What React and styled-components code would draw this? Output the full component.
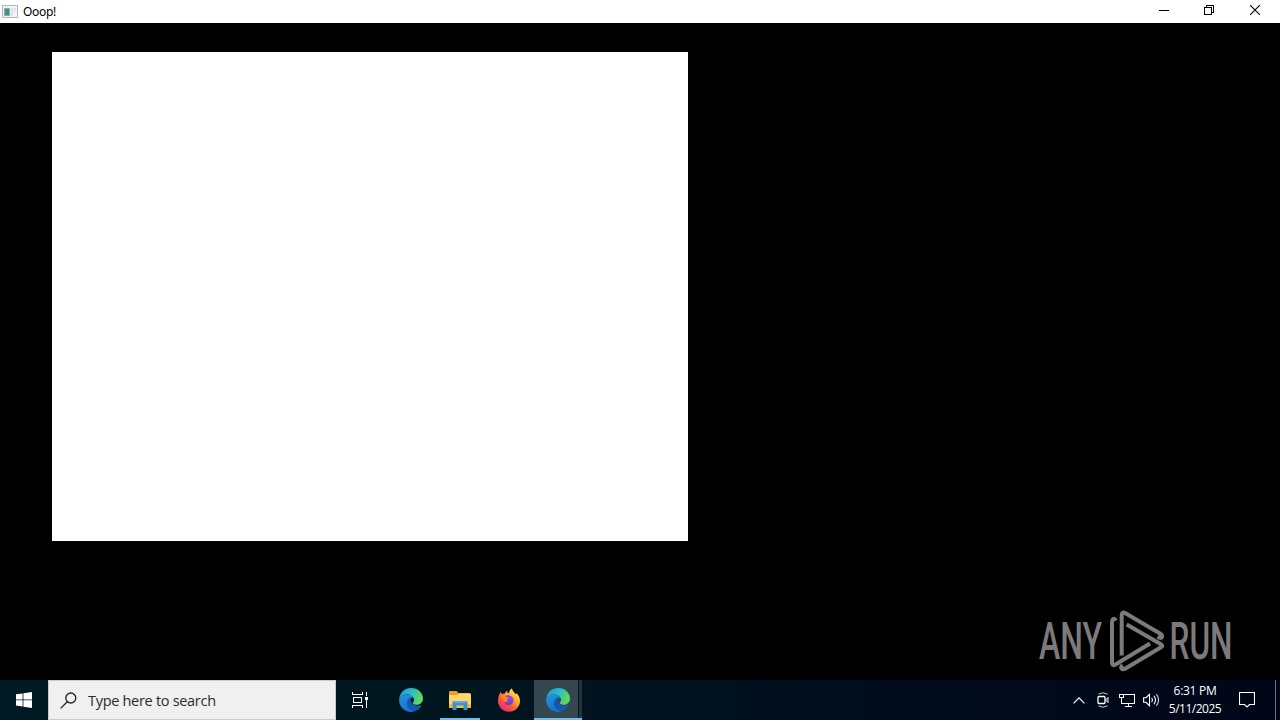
import React from 'react'
import styled, { createGlobalStyle } from 'styled-components';


function App() {
    return (
        <Screen>
            <GlobalStyle />
            <TitleBar>
                <AppIcon />
                <Title>Ooop!</Title>
                <CaptionButton $width={44}><MinimizeIcon /></CaptionButton>
                <CaptionButton><RestoreIcon /></CaptionButton>
                <CaptionButton><CloseIcon /></CaptionButton>
            </TitleBar>

            <Client>
                <Canvas />
                <Watermark />
            </Client>

            <Taskbar>
                <StartButton><WindowsIcon /></StartButton>
                <Search>
                    <SearchIcon />
                    <SearchText>Type here to search</SearchText>
                </Search>
                <TaskView><TaskViewIcon /></TaskView>
                <Apps>
                    <AppButton><EdgeIcon id="edge1" /></AppButton>
                    <AppButton $open><FolderIcon /></AppButton>
                    <AppButton><FirefoxIcon /></AppButton>
                    <ActiveGroup>
                        <ActiveButton><EdgeIcon id="edge2" /></ActiveButton>
                        <StackEdge />
                    </ActiveGroup>
                </Apps>
                <Tray>
                    <TrayIcon><ChevronIcon /></TrayIcon>
                    <TrayIcon><MeetIcon /></TrayIcon>
                    <TrayIcon><NetworkIcon /></TrayIcon>
                    <TrayIcon><VolumeIcon /></TrayIcon>
                </Tray>
                <Clock>
                    <Time>6:31 PM</Time>
                    <Day>5/11/2025</Day>
                </Clock>
                <Notifications><NoteIcon /></Notifications>
                <ShowDesktop />
            </Taskbar>
        </Screen>
    )
}

export default App


// title bar icons

function AppIcon() {
    return (
        <svg width="16" height="14" viewBox="0 0 16 14">
            <rect x="0.5" y="0.5" width="15" height="12" fill="#f4f2f5" stroke="#b9b4bc" />
            <rect x="2" y="3" width="6" height="8" fill="#7fb3a6" />
            <rect x="3" y="4" width="4" height="6" fill="#4c9080" />
            <rect x="9" y="3" width="2" height="8" fill="#d3e2ee" />
            <rect x="12" y="3" width="2" height="4" fill="#dfe3ee" />
        </svg>
    )
}

function MinimizeIcon() {
    return (
        <svg width="10" height="10" viewBox="0 0 10 10" shapeRendering="crispEdges">
            <rect x="0" y="5" width="10" height="1" fill="#000" />
        </svg>
    )
}

function RestoreIcon() {
    return (
        <svg width="10" height="10" viewBox="0 0 10 10" fill="none" stroke="#000" shapeRendering="crispEdges">
            <path d="M2.5 2.5V0.5H9.5V7.5H7.5" />
            <rect x="0.5" y="2.5" width="7" height="7" />
        </svg>
    )
}

function CloseIcon() {
    return (
        <svg width="10" height="10" viewBox="0 0 10 10" stroke="#000" strokeWidth="1.1">
            <path d="M0 0L10 10M10 0L0 10" />
        </svg>
    )
}

function Watermark() {
    return (
        <Mark width="200" height="66" viewBox="0 0 200 66">
            <text x="4" y="51" textLength="63" lengthAdjust="spacingAndGlyphs">ANY</text>
            <g fill="none" stroke="#7b7b7b" strokeWidth="4" strokeLinejoin="round">
                <path d="M81 12.500C79 9.500 77 11 77 14V54.500Q77 58.500 80.500 56.500L115 35.500" />
                <path d="M86.700 47.500V7.500Q86.700 3 90.500 5.200L125 25.500C129 28 127 31.500 122.500 28.700" />
                <path d="M91.700 16.500L126 36.300Q128.500 37.800 126 39.300L90.500 60.500C87 62.500 84.500 59.500 87.500 57" />
            </g>
            <text x="134.5" y="51" textLength="63" lengthAdjust="spacingAndGlyphs">RUN</text>
        </Mark>
    )
}

// taskbar icons

function WindowsIcon() {
    return (
        <svg width="16" height="16" viewBox="0 0 16 16" fill="#fff">
            <path d="M0 2.300L6.600 1.400V7.500H0ZM7.400 1.300L16 0V7.500H7.400ZM0 8.300H6.600V14.500L0 13.600ZM7.400 8.300H16V16L7.400 14.700Z" />
        </svg>
    )
}

function SearchIcon() {
    return (
        <svg width="17" height="17" viewBox="0 0 17 17" fill="none" stroke="#222" strokeWidth="1.3">
            <circle cx="10.800" cy="6" r="5" />
            <path d="M7.300 9.700L0.600 16.400" />
        </svg>
    )
}

function TaskViewIcon() {
    return (
        <svg width="16" height="16" viewBox="0 0 16 16" fill="none" stroke="#fff" shapeRendering="crispEdges">
            <path d="M0.500 0V2.500H10.500V0M0.500 16V13.500H10.500V16" />
            <rect x="1.500" y="5.500" width="8" height="5" />
            <path d="M14.500 0V4M14.500 8V16" />
            <rect x="13" y="5" width="3" height="3" fill="#fff" stroke="none" />
        </svg>
    )
}

function EdgeIcon({ id }) {
    return (
        <svg width="24" height="24" viewBox="0 0 24 24">
            <defs>
                <linearGradient id={id + 'top'} x1="0" y1="0.300" x2="1" y2="0.600">
                    <stop offset="0" stopColor="#2299d8" />
                    <stop offset="0.500" stopColor="#30bcc4" />
                    <stop offset="0.900" stopColor="#5fd75c" />
                </linearGradient>
                <linearGradient id={id + 'left'} x1="0" y1="0" x2="0.300" y2="1">
                    <stop offset="0" stopColor="#1f96dc" />
                    <stop offset="1" stopColor="#1473cc" />
                </linearGradient>
            </defs>
            <path d="M0.200 11C0.800 4.500 5.800 0 12 0C19 0 24 5 24 10.500C24 14.500 21 16.800 17.500 16.800C14.500 16.800 13.600 15.800 13.600 15.100C13.600 14.500 15 14 15 11.800C15 8.800 11.800 6.500 8.300 6.500C4.500 6.500 1.300 8.300 0.200 11Z" fill={`url(#${id}top)`} />
            <path d="M0.100 12C0.100 8.800 3.700 6.400 8 6.400C11.500 6.400 14 8 14.700 10.200C11.500 8.500 8.500 11.500 8.500 15C8.500 19.500 12 22.700 16 23.200C14.800 23.700 13.500 24 12 24C5.500 24 0 18.800 0.100 12Z" fill={`url(#${id}left)`} />
            <path d="M12 9.700C9.500 10.300 8 12.800 8 15.500C8 19.500 11.500 23.300 16 23.200C19 22.200 21 20.300 22.200 18.200C22.500 17.600 22 17.200 21.500 17.300C19 18.200 16 17.500 14 16C12.200 14.600 11.700 13.300 11.800 12C11.900 11 12.200 10.300 13 9.700Z" fill="#1559ae" />
        </svg>
    )
}

function FolderIcon() {
    return (
        <svg width="22" height="20" viewBox="0 0 22 20">
            <path d="M0 2Q0 1 1 1H7.500L9.500 3H21V8H0Z" fill="#e8a020" />
            <path d="M0 5H8L10 3.500H21Q22 3.500 22 4.500V18H0Z" fill="#ffd667" />
            <path d="M0 14H22V18H0Z" fill="#f5bd3d" />
            <path d="M3.500 20V12Q3.500 11 4.500 11H17.500Q18.500 11 18.500 12V20H14.500V15.500H7.500V20Z" fill="#3f92d2" />
            <path d="M4.500 11H17.500V13H4.500Z" fill="#5daee8" />
        </svg>
    )
}

function FirefoxIcon() {
    return (
        <svg width="24" height="24" viewBox="0 0 24 24">
            <defs>
                <linearGradient id="fox" x1="0.850" y1="0.050" x2="0.200" y2="0.950">
                    <stop offset="0" stopColor="#fff04a" />
                    <stop offset="0.350" stopColor="#ffb02e" />
                    <stop offset="0.650" stopColor="#ff5a36" />
                    <stop offset="1" stopColor="#e8247c" />
                </linearGradient>
                <linearGradient id="globe" x1="0.800" y1="0" x2="0.300" y2="1">
                    <stop offset="0" stopColor="#a847e0" />
                    <stop offset="1" stopColor="#5a45c0" />
                </linearGradient>
            </defs>
            <path d="M3.500 4L5 6.200C6 5.500 7 5.300 8 5.400C8.300 4.300 9.300 3.200 10.300 2.800C10 4.300 10.600 5 11.800 5.200C12.500 3 13.200 1.200 15 0.200C15 2.800 17.500 4 19 6.500L19.400 5C21.800 7.300 23 10 23 13C23 19 18 23.800 12 23.800C6 23.800 1 19 1 13C1 9.500 2 6.500 3.500 4Z" fill="url(#fox)" />
            <path d="M8 8C10 6.500 15 7 16.300 10.500C17.500 14 15 17.200 12 17.200C9 17.200 7.300 15.500 7 13.500C8 14.500 10 14.700 11.500 13.200C10.300 12.700 9.600 12 9.600 11L11.500 10C10.500 9 9 9.500 8 8Z" fill="url(#globe)" />
            <path d="M5 7.500C6.500 8 7.500 8 8.500 9.500L11.500 10.200C11 11 9.800 11.200 9.600 12.300C10 13.500 8 14.500 6.800 13C5.500 11.500 4.500 9.500 5 7.500Z" fill="#ff8428" />
        </svg>
    )
}

function ChevronIcon() {
    return (
        <svg width="12" height="7" viewBox="0 0 12 7" fill="none" stroke="#fff" strokeWidth="1.200">
            <path d="M0.600 6.300L6 0.900L11.400 6.300" />
        </svg>
    )
}

function MeetIcon() {
    return (
        <svg width="12" height="16" viewBox="0 0 12 16" fill="none" stroke="#fff">
            <path d="M1.500 2.200Q6 -0.700 10.500 2.200M1.500 13.800Q6 16.700 10.500 13.800" stroke="#c0c4cc" />
            <rect x="1" y="4.500" width="7" height="7" rx="1" strokeWidth="1.300" />
            <path d="M8.500 8L11 5.500V10.500Z" />
        </svg>
    )
}

function NetworkIcon() {
    return (
        <svg width="17" height="15" viewBox="0 0 17 15" fill="none" stroke="#fff" shapeRendering="crispEdges">
            <path d="M5 1.500H15.500V10.500H2.500V5M9.500 10V13M6 13.500H13" />
            <rect x="0.500" y="1.500" width="4" height="3" />
        </svg>
    )
}

function VolumeIcon() {
    return (
        <svg width="17" height="14" viewBox="0 0 17 14" fill="none" stroke="#fff" strokeWidth="1.100">
            <path d="M0.600 4.700H3L6.500 1.300V12.700L3 9.300H0.600Z" />
            <path d="M8.700 4.700Q10.300 7 8.700 9.300M11 2.800Q14 7 11 11.200" />
            <path d="M13.300 1Q17.800 7 13.300 13" stroke="#d5d8de" />
        </svg>
    )
}

function NoteIcon() {
    return (
        <svg width="16" height="16" viewBox="0 0 16 16" fill="none" stroke="#fff" strokeWidth="1.100">
            <path d="M0.500 0.500H15.500V12.500H10.500L8 15L5.500 12.500H0.500Z" />
        </svg>
    )
}


const GlobalStyle = createGlobalStyle`
 body
 {
    margin: 0;
    background: #000;
    overflow: hidden;
 }
 svg
 {
    display: block;
    flex: none;
 }
`;

const Screen = styled.div`
 width: 1280px;
 height: 720px;
 display: flex;
 flex-direction: column;
 background: #000;
 font-family: "Open Sans", "Noto Sans", sans-serif;
`;

const TitleBar = styled.div`
 display: flex;
 align-items: center;
 box-sizing: border-box;
 height: 23px;
 padding: 0 2px;
 background: #fff;
`;

const Title = styled.div`
 flex: 1;
 margin-left: 5px;
 font-family: "Noto Sans", sans-serif;
 font-size: 12px;
 letter-spacing: -0.3px;
 line-height: 22px;
 color: #000;
`;

const CaptionButton = styled.div`
 width: ${props => props.$width || 46}px;
 height: 20px;
 display: flex;
 align-items: center;
 justify-content: center;
 margin-bottom: 3px;
`;

const Client = styled.div`
 flex: 1;
 position: relative;
 padding: 29px 0 0 52px;
`;

const Canvas = styled.div`
 width: 636px;
 height: 489px;
 background: #fff;
`;

const Mark = styled.svg`
 position: absolute;
 right: 45px;
 bottom: 6px;
 overflow: visible;
 text
 {
    font-family: Roboto, sans-serif;
    font-size: 52px;
    font-weight: 500;
    fill: #7b7b7b;
 }
`;

const Taskbar = styled.div`
 display: flex;
 height: 40px;
 background: linear-gradient(90deg, #001a24 0%, #00161f 35%, #000d1c 65%, #000618 100%);
`;

const StartButton = styled.div`
 width: 48px;
 display: flex;
 align-items: center;
 justify-content: center;
`;

const Search = styled.div`
 box-sizing: border-box;
 width: 288px;
 display: flex;
 align-items: center;
 padding-left: 11px;
 background: #f0f0f0;
 border: 1px solid #c9cccd;
`;

const SearchText = styled.div`
 margin-left: 11px;
 padding-top: 2px;
 font-size: 14.5px;
 letter-spacing: -0.3px;
 line-height: 20px;
 color: #2b2b2b;
`;

const TaskView = styled.div`
 width: 48px;
 display: flex;
 align-items: center;
 justify-content: center;
`;

const Apps = styled.div`
 display: flex;
 gap: 9px;
 padding-left: 7px;
`;

const AppButton = styled.div`
 box-sizing: border-box;
 width: 40px;
 display: flex;
 align-items: center;
 justify-content: center;
 padding-top: 2px;
 border-bottom: 2px solid ${props => props.$open ? '#76b9ed' : 'transparent'};
`;

const ActiveGroup = styled.div`
 display: flex;
 gap: 1px;
 margin-left: -4px;
 border-bottom: 2px solid #76b9ed;
`;

const ActiveButton = styled.div`
 width: 44px;
 display: flex;
 align-items: center;
 justify-content: center;
 padding-top: 2px;
 box-sizing: border-box;
 padding-left: 4px;
 background: #34464e;
`;

const StackEdge = styled.div`
 width: 3px;
 background: #22343d;
`;

const Tray = styled.div`
 display: flex;
 margin-left: auto;
`;

const TrayIcon = styled.div`
 width: 24px;
 display: flex;
 align-items: center;
 justify-content: center;
`;

const Clock = styled.div`
 width: 64px;
 display: flex;
 flex-direction: column;
 align-items: center;
 padding-top: 2px;
 color: #fff;
 font-size: 12px;
 line-height: 18px;
 white-space: nowrap;
`;

const Time = styled.div`
 letter-spacing: -0.3px;
`;

const Day = styled.div`
 letter-spacing: -0.5px;
`;

const Notifications = styled.div`
 width: 40px;
 display: flex;
 align-items: center;
 justify-content: center;
`;

const ShowDesktop = styled.div`
 width: 4px;
 margin-left: 8px;
 border-left: 1px solid #70747f;
`;
